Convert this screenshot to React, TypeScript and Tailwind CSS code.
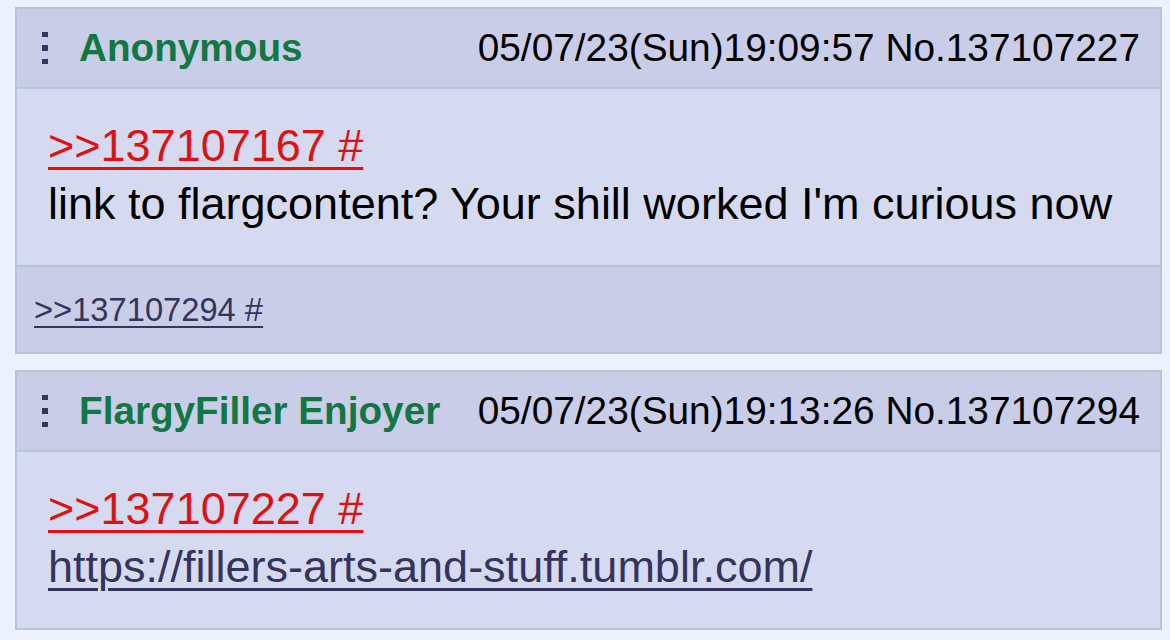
import React from "react";

interface Post {
  name: string;
  time: string;
  no: string;
  quote: string;
  lines: { text: string; link?: boolean }[];
  replies?: string[];
}

const posts: Post[] = [
  {
    name: "Anonymous",
    time: "05/07/23(Sun)19:09:57",
    no: "137107227",
    quote: ">>137107167 #",
    lines: [{ text: "link to flargcontent? Your shill worked I'm curious now" }],
    replies: [">>137107294 #"],
  },
  {
    name: "FlargyFiller Enjoyer",
    time: "05/07/23(Sun)19:13:26",
    no: "137107294",
    quote: ">>137107227 #",
    lines: [{ text: "https://fillers-arts-and-stuff.tumblr.com/", link: true }],
  },
];

const Dots = () => (
  <svg width="6" height="32" viewBox="0 0 6 32" className="shrink-0">
    <rect x="0" y="0" width="6" height="5" fill="#34345c" />
    <rect x="0" y="13" width="6" height="6" fill="#34345c" />
    <rect x="0" y="27" width="6" height="5" fill="#34345c" />
  </svg>
);

const PostCard: React.FC<{ post: Post }> = ({ post }) => {
  return (
    <div className="border-2 border-[#b7c5d9] bg-[#d6daf0]">
      <div className="h-[80px] flex items-center justify-between pl-[25px] pr-[20px] bg-[#c9cde8] border-b-2 border-[#b7c5d9]">
        <div className="flex items-center gap-[31px]">
          <Dots />
          <span className="text-[38.7px] font-bold text-[#117743] leading-none">{post.name}</span>
        </div>
        <span className="text-[38.8px] text-black leading-none">
          {post.time} No.{post.no}
        </span>
      </div>
      <div className="pl-[31px] pr-4 pt-[28px] pb-[32px] text-[45px] leading-[58px]">
        <div>
          <a className="text-[#dd1111] underline decoration-[3px] underline-offset-[6px]">{post.quote}</a>
        </div>
        {post.lines.map((l, i) => (
          <div key={i}>
            {l.link ? (
              <a className="text-[#34345c] underline decoration-[3px] underline-offset-[6px]">{l.text}</a>
            ) : (
              <span className="text-black">{l.text}</span>
            )}
          </div>
        ))}
      </div>
      {post.replies && (
        <div className="h-[87px] flex items-center pl-[17px] bg-[#c9cde8] border-t-2 border-[#b7c5d9]">
          {post.replies.map((r, i) => (
            <a key={i} className="text-[32.7px] text-[#34345c] underline decoration-2 underline-offset-[5px]">
              {r}
            </a>
          ))}
        </div>
      )}
    </div>
  );
};

export default function App() {
  return (
    <div
      className="w-[1170px] h-[640px] bg-[#eef2ff] pt-[7px] pl-[15px] pr-[8px] overflow-hidden"
      style={{ fontFamily: '"Liberation Sans", Arial, sans-serif' }}
    >
      <div className="flex flex-col gap-[16px]">
        {posts.map((p) => (
          <PostCard key={p.no} post={p} />
        ))}
      </div>
    </div>
  );
}
